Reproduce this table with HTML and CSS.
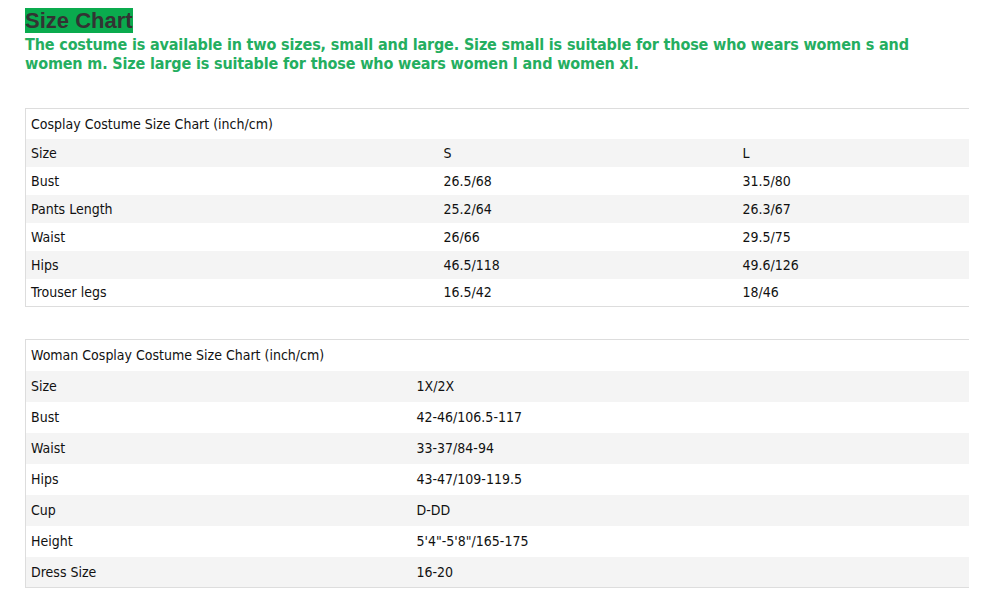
FILE: index.html
```html
<!DOCTYPE html>
<html>
<head>
<meta charset="utf-8">
<link rel="stylesheet" href="styles.css">
</head>
<body>
<div class="page">
  <h2 class="title">Size Chart</h2>
  <p class="intro">The costume is available in two sizes, small and large. Size small is suitable for those who wears women s and women m. Size large is suitable for those who wears women l and women xl.</p>

  <table class="chart chart-a">
    <colgroup><col class="a1"><col class="a2"><col class="a3"></colgroup>
    <tr class="head"><td colspan="3">Cosplay Costume Size Chart (inch/cm)</td></tr>
    <tr class="odd"><td>Size</td><td>S</td><td>L</td></tr>
    <tr><td>Bust</td><td>26.5/68</td><td>31.5/80</td></tr>
    <tr class="odd"><td>Pants Length</td><td>25.2/64</td><td>26.3/67</td></tr>
    <tr><td>Waist</td><td>26/66</td><td>29.5/75</td></tr>
    <tr class="odd"><td>Hips</td><td>46.5/118</td><td>49.6/126</td></tr>
    <tr><td>Trouser legs</td><td>16.5/42</td><td>18/46</td></tr>
  </table>

  <table class="chart chart-b">
    <colgroup><col class="b1"><col class="b2"></colgroup>
    <tr class="head"><td colspan="2">Woman Cosplay Costume Size Chart (inch/cm)</td></tr>
    <tr class="odd"><td>Size</td><td>1X/2X</td></tr>
    <tr><td>Bust</td><td>42-46/106.5-117</td></tr>
    <tr class="odd"><td>Waist</td><td>33-37/84-94</td></tr>
    <tr><td>Hips</td><td>43-47/109-119.5</td></tr>
    <tr class="odd"><td>Cup</td><td>D-DD</td></tr>
    <tr><td>Height</td><td>5'4"-5'8"/165-175</td></tr>
    <tr class="odd"><td>Dress Size</td><td>16-20</td></tr>
  </table>
</div>
</body>
</html>
```

FILE: styles.css
```css
html, body {
  margin: 0;
  padding: 0;
  background: #fff;
}
.page {
  padding: 8px 0 0 25px;
  width: 944px;
}
.title {
  display: inline-block;
  margin: 0;
  background: #0aab4e;
  color: #333;
  font-family: "Liberation Sans", Arial, sans-serif;
  font-weight: bold;
  font-size: 22px;
  line-height: 25px;
}
.intro {
  margin: 0 0 35px 0;
  padding-top: 2px;
  color: #24ae60;
  font-family: "DejaVu Sans Condensed", "DejaVu Sans", sans-serif;
  font-weight: bold;
  font-size: 16px;
  line-height: 19px;
  letter-spacing: -0.15px;
  width: 900px;
}
.chart {
  width: 943px;
  border-collapse: collapse;
  table-layout: fixed;
  border-top: 1px solid #ddd;
  border-bottom: 1px solid #ddd;
  border-left: 1px solid #ddd;
  font-family: "DejaVu Sans Condensed", "DejaVu Sans", sans-serif;
  font-size: 14px;
  color: #111;
  margin-bottom: 32px;
}
.chart td {
  padding: 0 5px;
  vertical-align: middle;
}
.chart-a tr { height: 28px; }
.chart-a tr.head { height: 30px; }
.chart-b tr { height: 31px; }
.chart-b tr.head { height: 31px; }
.chart tr.odd { background: #f4f4f4; }
.a1 { width: 413px; }
.a2 { width: 299px; }
.a3 { width: 231px; }
.b1 { width: 386px; }
.b2 { width: 557px; }
```
